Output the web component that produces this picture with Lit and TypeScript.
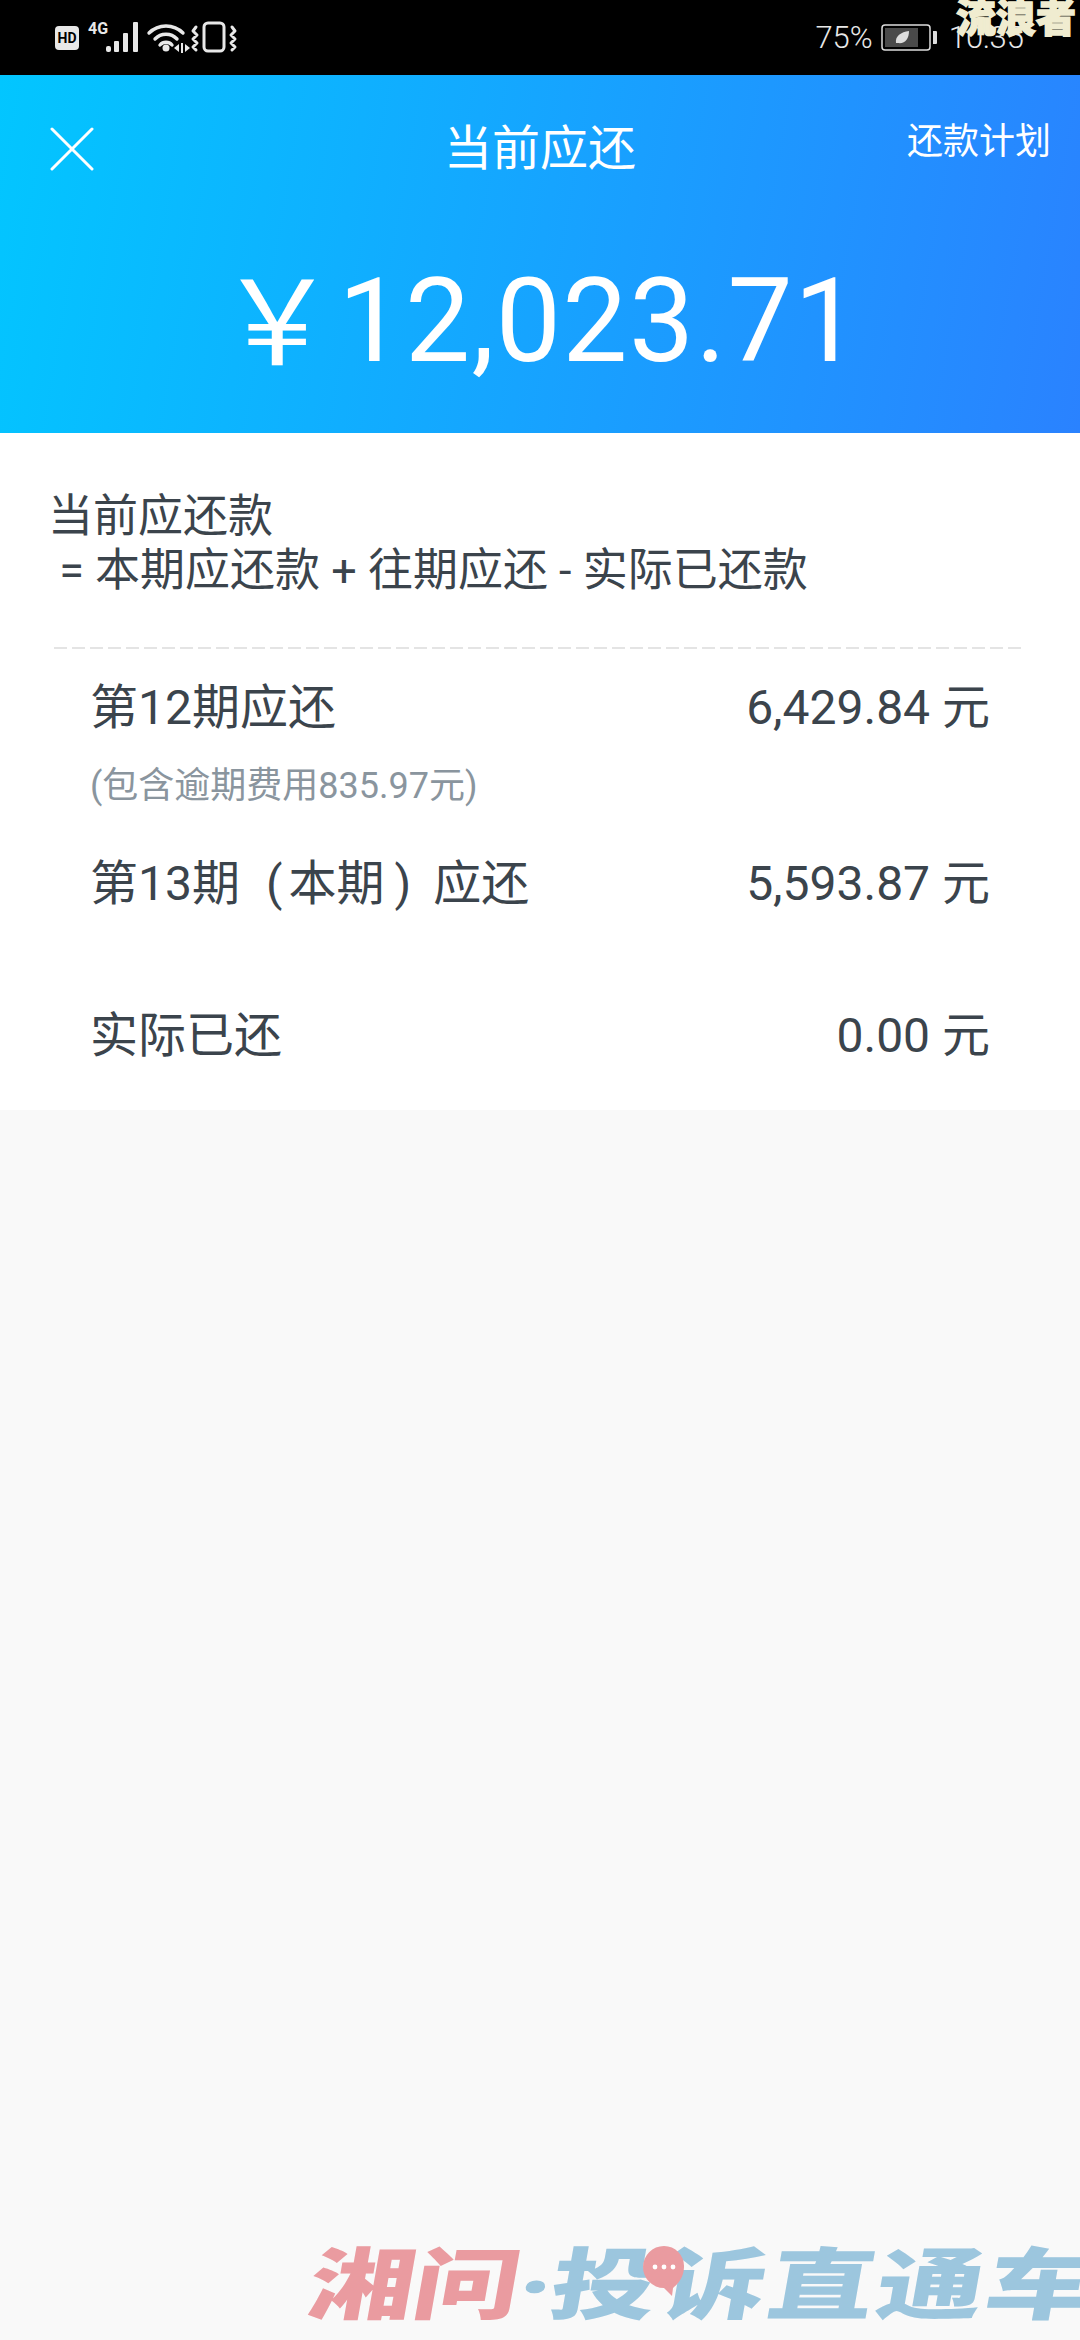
import { LitElement, html, css, svg } from "lit";
import { customElement } from "lit/decorators.js";

@customElement("app-root")
export class AppRoot extends LitElement {
  static styles = css`
    :host { display: block; width: 1080px; height: 2340px; position: relative; overflow: hidden; background: #f9f9f9;
      font-family: Roboto, "Noto Sans CJK SC", sans-serif; color: #3b444c; }
    .status { height: 75px; background: #000; display: flex; align-items: center; color: #e8e8e8; box-sizing: border-box; padding: 0 0 0 55px; }
    .status svg { display: block; }
    .spacer { flex: 1; }
    .pct { font-size: 31px; margin-right: 6px; font-weight: 300; }
    .time { font-size: 31px; margin-left: 10px; margin-right: 56px; font-weight: 300; }
    .head { height: 358px; background: linear-gradient(100deg, #02c6ff 0%, #2a82ff 100%); color: #fff; position: relative; display: flex; flex-direction: column; align-items: center; }
    .title { font-size: 48px; line-height: 60px; margin-top: 44px; }
    .plan { position: absolute; right: 29px; top: 42px; font-size: 36px; line-height: 50px; }
    .close { position: absolute; left: 50px; top: 52px; }
    .amount { font-size: 116px; line-height: 130px; margin-top: 70px; letter-spacing: 1.4px; white-space: pre; display: flex; align-items: center; padding-right: 1px; }
    .yen { font-family: "Noto Sans CJK SC", sans-serif; font-size: 118px; line-height: 130px; margin: 0 2px 14px 0; letter-spacing: 0; }
    .formula { background: #fff; height: 216px; padding: 57px 0 0 48px; box-sizing: border-box; font-size: 45px; line-height: 54px; }
    .formula div { white-space: pre; }
    .dash { height: 2px; background: repeating-linear-gradient(90deg, #e4e4e4 0 13px, transparent 13px 18px); margin: 0 58px 0 54px; position: relative; top: -2px; }
    .list { background: #fff; height: 461px; padding: 0 90px 0 90px; box-sizing: border-box; margin-top: -2px; }
    .row { display: flex; justify-content: space-between; font-size: 48px; line-height: 60px; }
    .r1 { padding-top: 29px; }
    .r2 { padding-top: 45px; }
    .r3 { padding-top: 92px; }
    .note { font-size: 36px; line-height: 46px; color: #8a959e; margin-top: 25px; }
    .po { margin: 0 6px 0 26px; }
    .pc { margin: 0 22px 0 10px; }
    .wm { position: absolute; right: 4px; top: 0; font-size: 40px; font-weight: 900; line-height: 38px; color: #f0ecd0; -webkit-text-stroke: 1.5px #f0ecd0; }
    .logo { position: absolute; left: 309px; top: 2245px; height: 84px; display: flex; align-items: center; font-size: 78px; line-height: 84px; font-weight: 900; transform-origin: 0 50%; transform: skewX(-10deg) scaleX(1.36); white-space: nowrap; letter-spacing: -1px; }
    .red { color: #ea9ba0; }
    .blue { color: #9cc6de; letter-spacing: 2px; }
    .dot { color: #9cc6de; }
    .bubble { position: absolute; left: 642px; top: 2244px; }
  `;

  statusLeft() {
    return svg`
      <rect x="0" y="26" width="24" height="24" rx="4" fill="#e8e8e8"/>
      <text x="12" y="43" text-anchor="middle" font-size="14" font-weight="700" font-family="Roboto" fill="#000">HD</text>
      <text x="33" y="34" font-size="16" font-weight="700" font-family="Roboto" fill="#e8e8e8">4G</text>
      <g fill="#e8e8e8">
        <rect x="51" y="46" width="5" height="6" rx="2"/><rect x="59" y="41" width="5" height="11" rx="1"/>
        <rect x="68" y="33" width="5" height="19" rx="1"/><rect x="78" y="22" width="5" height="30" rx="1"/>
        <circle cx="111" cy="48" r="3.5"/><path d="M119 48l5-4v8zM126 43h2v10h-2zM130 44l5 4-5 4z"/>
      </g>
      <g fill="none" stroke="#e8e8e8" stroke-width="3.4" stroke-linecap="round">
        <path d="M94 33a24 24 0 0 1 34 0M100 39a15 15 0 0 1 22 0M105 45a8 8 0 0 1 12 0"/>
        <rect x="149" y="23" width="20" height="28" rx="4" stroke-width="3"/>
        <path d="M141 27l-3 4 4 4-4 4 4 4-4 4 3 3M177 27l3 4-4 4 4 4-4 4 4 4-3 3" stroke-width="3" stroke-linejoin="round"/>
      </g>`;
  }

  render() {
    return html`
      <div class="status">
        <svg width="185" height="75" viewBox="0 0 185 75">${this.statusLeft()}</svg>
        <div class="spacer"></div>
        <span class="pct">75%</span>
        <svg width="60" height="30" viewBox="0 0 60 30">
          <rect x="3" y="2" width="48" height="25" rx="3" fill="none" stroke="#ddd" stroke-width="1.5"/>
          <rect x="6" y="5" width="33" height="19" fill="#4a4a4a"/>
          <path d="M54 8h3a1 1 0 0 1 1 1v11a1 1 0 0 1-1 1h-3z" fill="#ddd"/>
          <path d="M17 20c-1-7 5-11 13-12 0 8-4 13-11 12z" fill="#ddd"/>
        </svg>
        <span class="time">10:35</span>
      </div>
      <div class="head">
        <svg class="close" width="44" height="44" viewBox="0 0 44 44"><path d="M2 2l40 40M42 2L2 42" stroke="#fff" stroke-width="3" stroke-linecap="round"/></svg>
        <div class="title">当前应还</div>
        <div class="plan">还款计划</div>
        <div class="amount"><span class="yen">${"\uFFE5"}</span><span>12,023.71</span></div>
      </div>
      <div class="formula">
        <div>当前应还款</div>
        <div> = 本期应还款 + 往期应还 - 实际已还款</div>
      </div>
      <div class="dash"></div>
      <div class="list">
        <div class="row r1"><span>第12期应还</span><span>6,429.84 元</span></div>
        <div class="note">(包含逾期费用835.97元)</div>
        <div class="row r2"><span>第13期<span class="po">(</span>本期<span class="pc">)</span>应还</span><span>5,593.87 元</span></div>
        <div class="row r3"><span>实际已还</span><span>0.00 元</span></div>
      </div>
      <div class="wm">流浪者</div>
      <div class="logo"><span class="red">湘问</span><span class="dot">·</span><span class="blue">投诉直通车</span></div>
      <svg class="bubble" width="44" height="54" viewBox="0 0 44 54">
        <path d="M22 2a20 20 0 0 1 20 21c0 10-6 17-11 21l-1 8-8-8A20 20 0 0 1 22 2z" fill="#ea9ba0"/>
        <circle cx="13" cy="23" r="2.4" fill="#fff"/><circle cx="22" cy="23" r="2.4" fill="#fff"/><circle cx="31" cy="23" r="2.4" fill="#fff"/>
      </svg>
    `;
  }
}
